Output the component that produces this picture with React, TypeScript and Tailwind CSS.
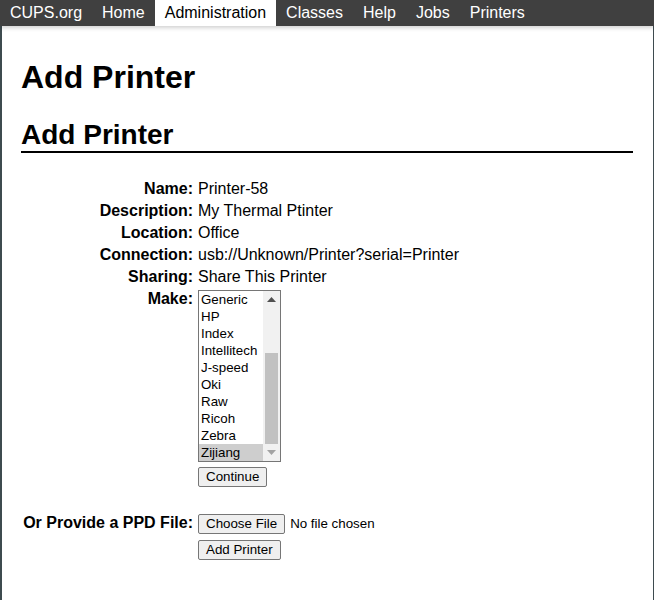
import React from "react";

const NAV = ["CUPS.org", "Home", "Administration", "Classes", "Help", "Jobs", "Printers"];
const MAKES = ["Generic", "HP", "Index", "Intellitech", "J-speed", "Oki", "Raw", "Ricoh", "Zebra", "Zijiang"];

const fields = [
  ["Name:", "Printer-58"],
  ["Description:", "My Thermal Ptinter"],
  ["Location:", "Office"],
  ["Connection:", "usb://Unknown/Printer?serial=Printer"],
  ["Sharing:", "Share This Printer"],
];

function Btn({ children }: { children: React.ReactNode }) {
  return (
    <button className="h-[20px] rounded-[2px] border border-[#767676] bg-[#efefef] px-[7px] text-[13.33px] leading-[18px] text-black">
      {children}
    </button>
  );
}

function MakeList() {
  return (
    <div className="mt-[2px] flex h-[172px] w-[83px] border border-[#767676] bg-white">
      <div className="flex-1 overflow-hidden text-[13.33px] leading-[17px]">
        {MAKES.map((m) => (
          <div key={m} className={"h-[17px] pl-[2px] " + (m === "Zijiang" ? "bg-[#cecece]" : "")}>
            {m}
          </div>
        ))}
      </div>
      <div className="flex w-[17px] flex-col bg-[#f1f1f1]">
        <div className="flex h-[17px] items-center justify-center">
          <svg width="9" height="5" viewBox="0 0 9 5">
            <path d="M0 5 L4.5 0 L9 5 Z" fill="#505050" />
          </svg>
        </div>
        <div className="flex flex-1 flex-col justify-end px-[2px]">
          <div className="h-[91px] bg-[#c1c1c1]" />
        </div>
        <div className="flex h-[17px] items-center justify-center">
          <svg width="9" height="5" viewBox="0 0 9 5">
            <path d="M0 0 L4.5 5 L9 0 Z" fill="#a3a3a3" />
          </svg>
        </div>
      </div>
    </div>
  );
}

export default function App() {
  return (
    <div className="min-h-[600px] w-[654px] bg-white font-['Liberation_Sans',Arial,sans-serif] text-black">
      <nav className="relative z-10 flex h-[26px] bg-[#404040] text-[16px] leading-[26px] shadow-[0_2px_4px_rgba(0,0,0,0.18)]">
        {NAV.map((n) => (
          <span
            key={n}
            className={
              "px-[10px] " + (n === "Administration" ? "bg-white text-black" : "text-white")
            }
          >
            {n}
          </span>
        ))}
      </nav>
      <div className="min-h-[574px] border-l-2 border-r border-[#3e4b4f] pl-[19px] pr-[20px]">
        <h1 className="pt-[33px] text-[32px] font-bold leading-[37px]">Add Printer</h1>
        <h2 className="mt-[23px] border-b-2 border-black text-[28px] font-bold leading-[32px]">Add Printer</h2>

        <div className="mt-[25px] grid grid-cols-[172px_1fr] gap-x-[5px] text-[16px] leading-[22px]">
          {fields.map(([k, v]) => (
            <React.Fragment key={k}>
              <div className="text-right font-bold">{k}</div>
              <div>{v}</div>
            </React.Fragment>
          ))}
          <div className="text-right font-bold">Make:</div>
          <div className="flex flex-col items-start">
            <MakeList />
            <div className="mt-[5px] flex">
              <Btn>Continue</Btn>
            </div>
          </div>

          <div className="mt-[25px] text-right font-bold">Or Provide a PPD File:</div>
          <div className="mt-[24px] flex flex-col items-start">
            <div className="mt-[3px] flex h-[20px] items-center">
              <Btn>Choose File</Btn>
              <span className="ml-[5px] text-[13.33px] leading-[20px]">No file chosen</span>
            </div>
            <div className="mt-[6px] flex">
              <Btn>Add Printer</Btn>
            </div>
          </div>
        </div>
      </div>
    </div>
  );
}
